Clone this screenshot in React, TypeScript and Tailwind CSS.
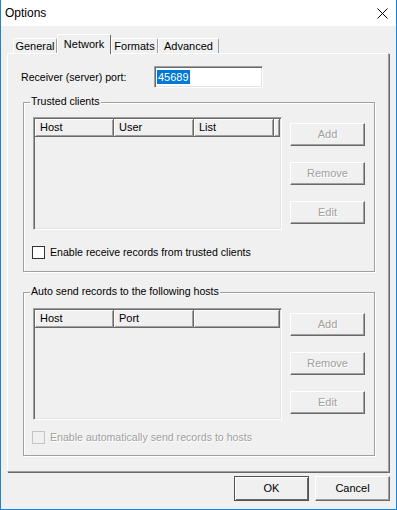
import React from 'react';

interface Column {
  label: string;
  width?: number;
}

const raised = 'border border-t-white border-l-white border-r-[#696969] border-b-[#696969] shadow-[inset_-1px_-1px_0_#a0a0a0]';

function DisabledButton({ label }: { label: string }) {
  return (
    <div className={`w-[75px] h-[23px] flex items-center justify-center bg-[#f0f0f0] text-[#a0a0a0] [text-shadow:1px_1px_0_#fff] ${raised}`}>
      {label}
    </div>
  );
}

function ListView({ columns, height }: { columns: Column[]; height: number }) {
  return (
    <div
      className="w-[249px] p-[1px] border border-t-[#a0a0a0] border-l-[#a0a0a0] border-r-white border-b-white shadow-[inset_1px_1px_0_#696969,inset_-1px_-1px_0_#e3e3e3] bg-[#f0f0f0]"
      style={{ height }}
    >
      <div className="flex h-[18px]">
        {columns.map((col, i) => (
          <div
            key={i}
            className={`h-full flex items-center pl-[5px] border-r border-b border-[#696969] shadow-[inset_1px_1px_0_#fff,inset_-1px_-1px_0_#a0a0a0] ${col.width ? 'shrink-0' : 'flex-1'}`}
            style={col.width ? { width: col.width } : undefined}
          >
            {col.label}
          </div>
        ))}
      </div>
    </div>
  );
}

function Checkbox({ label, disabled }: { label: string; disabled?: boolean }) {
  return (
    <div className="flex items-center h-[13px] ml-[8px]">
      <div
        className={
          disabled
            ? 'w-[13px] h-[13px] border border-[#c4c4c4] bg-[#f0f0f0]'
            : 'w-[13px] h-[13px] border border-[#333333] bg-white'
        }
      />
      <span className={disabled ? 'ml-[5px] text-[10.6px] text-[#a0a0a0] [text-shadow:1px_1px_0_#fff]' : 'ml-[5px] text-[10.6px] text-black'}>
        {label}
      </span>
    </div>
  );
}

function GroupBox({
  title,
  height,
  listTop,
  listHeight,
  buttonsTop,
  checkTop,
  columns,
  checkLabel,
  checkDisabled,
}: {
  title: string;
  height: number;
  listTop: number;
  listHeight: number;
  buttonsTop: number;
  checkTop: number;
  columns: Column[];
  checkLabel: string;
  checkDisabled?: boolean;
}) {
  return (
    <div
      className="relative ml-[15px] w-[352px] border border-[#a0a0a0] shadow-[inset_1px_1px_0_#fff,1px_1px_0_#fff]"
      style={{ height }}
    >
      <span className="absolute left-[6px] top-[-8px] px-[1px] bg-[#f0f0f0] text-[10.6px] leading-[13px]">{title}</span>
      <div className="flex ml-[9px]" style={{ marginTop: listTop }}>
        <ListView columns={columns} height={listHeight} />
        <div className="ml-[8px] flex flex-col gap-[16px]" style={{ paddingTop: buttonsTop }}>
          <DisabledButton label="Add" />
          <DisabledButton label="Remove" />
          <DisabledButton label="Edit" />
        </div>
      </div>
      <div style={{ marginTop: checkTop }}>
        <Checkbox label={checkLabel} disabled={checkDisabled} />
      </div>
    </div>
  );
}

export default function App() {
  const tabs = [
    { label: 'General', width: 44 },
    { label: 'Network', width: 54, selected: true },
    { label: 'Formats', width: 47 },
    { label: 'Advanced', width: 61 },
  ];

  return (
    <div className="w-[397px] h-[510px] flex flex-col bg-[#f0f0f0] border-l border-r border-b border-[#1883d7] font-['Liberation_Sans',Arial,sans-serif] text-[11px] text-black leading-[13px] overflow-hidden">
      {/* Title bar */}
      <div className="h-[26px] bg-white flex items-center justify-between shrink-0">
        <span className="pl-[4px] text-[12px] leading-[16px]">Options</span>
        <svg width="11" height="11" viewBox="0 0 11 11" className="mr-[8px]">
          <path d="M0.5 0.5 L10.5 10.5 M10.5 0.5 L0.5 10.5" stroke="#000" strokeWidth="1" fill="none" />
        </svg>
      </div>

      {/* Tabs */}
      <div className="flex items-end h-[19px] mt-[8px] ml-[12px] shrink-0">
        {tabs.map(tab => (
          <div
            key={tab.label}
            className={
              tab.selected
                ? 'relative z-10 h-[20px] mb-[-1px] flex items-start justify-center pt-[3px] bg-[#f0f0f0] border-l border-t border-r border-l-white border-t-white border-r-[#696969] rounded-t-[2px]'
                : 'h-[15px] flex items-center justify-center bg-[#f0f0f0] border-l border-t border-r border-l-white border-t-white border-r-[#a0a0a0] rounded-t-[2px]'
            }
            style={{ width: tab.width }}
          >
            {tab.label}
          </div>
        ))}
      </div>

      {/* Tab panel */}
      <div className="ml-[6px] w-[382px] h-[419px] shrink-0 flex flex-col border border-t-white border-l-white border-r-[#a0a0a0] border-b-[#a0a0a0] shadow-[1px_1px_0_#696969]">
        <div className="flex items-center mt-[12px] ml-[13px] h-[22px]">
          <span className="w-[133px] text-[10.6px]">Receiver (server) port:</span>
          <div className="w-[109px] h-[22px] flex items-center pl-[1px] bg-white border border-t-[#a0a0a0] border-l-[#a0a0a0] border-r-white border-b-white shadow-[inset_1px_1px_0_#696969,inset_-1px_-1px_0_#e3e3e3]">
            <span className="ml-[1px] px-[1px] bg-[#0078d7] text-white leading-[14px]">45689</span>
          </div>
        </div>

        <div className="mt-[14px]">
          <GroupBox
            title="Trusted clients"
            height={170}
            listTop={14}
            listHeight={113}
            buttonsTop={6}
            checkTop={16}
            columns={[{ label: 'Host', width: 79 }, { label: 'User', width: 80 }, { label: 'List', width: 80 }, { label: '' }]}
            checkLabel="Enable receive records from trusted clients"
          />
        </div>

        <div className="mt-[20px]">
          <GroupBox
            title="Auto send records to the following hosts"
            height={164}
            listTop={15}
            listHeight={112}
            buttonsTop={5}
            checkTop={11}
            columns={[{ label: 'Host', width: 79 }, { label: 'Port', width: 80 }, { label: '' }]}
            checkLabel="Enable automatically send records to hosts"
            checkDisabled
          />
        </div>
      </div>

      {/* Dialog buttons */}
      <div className="flex justify-end gap-[6px] mt-[4px] mr-[6px]">
        <div className="w-[75px] h-[25px] flex items-center justify-center border border-[#505050] shadow-[inset_1px_1px_0_#fff,inset_-1px_-1px_0_#696969] bg-[#f0f0f0]">
          OK
        </div>
        <div className={`w-[75px] h-[25px] flex items-center justify-center bg-[#f0f0f0] ${raised}`}>Cancel</div>
      </div>
    </div>
  );
}
